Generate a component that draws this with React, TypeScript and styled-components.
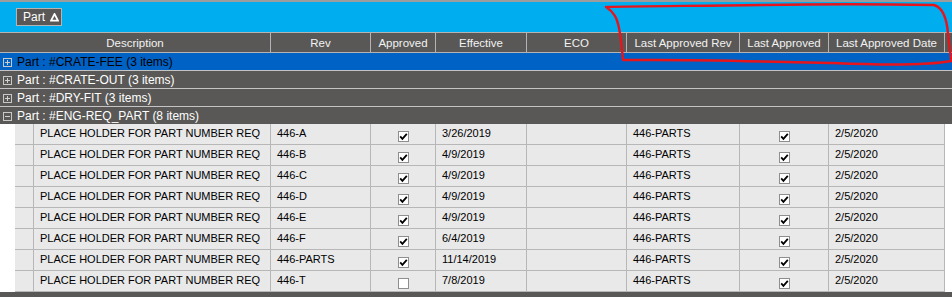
import React from "react";
import styled, { createGlobalStyle } from "styled-components";

const GlobalStyle = createGlobalStyle`
	html, body {
		margin: 0;
		padding: 0;
		background: #ffffff;
		font-family: "Liberation Sans", Arial, sans-serif;
		font-size: 11px;
	}
	* {
		box-sizing: border-box;
	}
`;

interface Column {
	title: string;
	width: number;
}

const columns: Column[] = [
	{ title: "Description", width: 271 },
	{ title: "Rev", width: 100 },
	{ title: "Approved", width: 65 },
	{ title: "Effective", width: 91 },
	{ title: "ECO", width: 100 },
	{ title: "Last Approved Rev", width: 113 },
	{ title: "Last Approved", width: 89 },
	{ title: "Last Approved Date", width: 116 }
];

interface PartRow {
	rev: string;
	approved: boolean;
	effective: string;
}

const parts: PartRow[] = [
	{ rev: "446-A", approved: true, effective: "3/26/2019" },
	{ rev: "446-B", approved: true, effective: "4/9/2019" },
	{ rev: "446-C", approved: true, effective: "4/9/2019" },
	{ rev: "446-D", approved: true, effective: "4/9/2019" },
	{ rev: "446-E", approved: true, effective: "4/9/2019" },
	{ rev: "446-F", approved: true, effective: "6/4/2019" },
	{ rev: "446-PARTS", approved: true, effective: "11/14/2019" },
	{ rev: "446-T", approved: false, effective: "7/8/2019" }
];

const groups = [
	{ name: "#CRATE-FEE", count: 3, selected: true, open: false },
	{ name: "#CRATE-OUT", count: 3, selected: false, open: false },
	{ name: "#DRY-FIT", count: 3, selected: false, open: false },
	{ name: "#ENG-REQ_PART", count: 8, selected: false, open: true }
];

const Page = styled.div`
	position: relative;
	width: 952px;
	height: 297px;
	overflow: hidden;
	border-top: 2px solid #9c9c9c;
	background: #ffffff;
`;

const GroupPanel = styled.div`
	height: 30px;
	background: #00adef;
	display: flex;
	align-items: flex-start;
	padding: 6px 0 0 16px;
`;

const GroupChip = styled.div`
	height: 18px;
	display: flex;
	align-items: center;
	gap: 5px;
	padding: 0 2px 0 6px;
	background: #595856;
	border: 1px solid #b4b4b4;
	color: #ffffff;
	font-size: 12px;
`;

const HeaderRow = styled.div`
	display: flex;
	height: 21px;
	background: #595856;
	border-top: 1px solid #b4b4b4;
	border-bottom: 1px solid #b4b4b4;
`;

const HeaderCell = styled.div<{ $w: number }>`
	width: ${p => p.$w}px;
	flex: none;
	display: flex;
	align-items: center;
	justify-content: center;
	color: #f2f2f2;
	font-size: 11.5px;
	border-right: 1px solid #b4b4b4;
	white-space: nowrap;
`;

const GroupRow = styled.div<{ $selected: boolean; $open: boolean }>`
	height: ${p => (p.$open ? 17 : 18)}px;
	display: flex;
	align-items: center;
	gap: 5px;
	padding-left: 3px;
	font-size: 12px;
	background: ${p => (p.$selected ? "#0062c4" : "#595856")};
	color: ${p => (p.$selected ? "#000000" : "#ffffff")};
	border-bottom: ${p => (p.$open ? "none" : "1px solid #c4c4c4")};
`;

const ExpandBox = styled.div`
	width: 9px;
	height: 9px;
	border: 1px solid #c8c8c8;
	position: relative;
	flex: none;
	margin-top: 1px;
`;

const DataRow = styled.div`
	display: flex;
	height: 21px;
`;

const Indent = styled.div`
	width: 15px;
	flex: none;
	background: #ffffff;
`;

const DataCell = styled.div<{ $w: number; $center?: boolean }>`
	width: ${p => p.$w}px;
	flex: none;
	background: #e9e9e9;
	border-right: 1px solid #b7b7b7;
	border-bottom: 1px solid #b7b7b7;
	color: #000000;
	padding: 3px 0 0 6px;
	white-space: nowrap;
	overflow: hidden;
	display: flex;
	justify-content: ${p => (p.$center ? "center" : "flex-start")};
	align-items: flex-start;
	${p => (p.$center ? "padding: 7px 0 0 0;" : "")}
`;

const CheckBox = styled.div`
	width: 11px;
	height: 11px;
	background: #ffffff;
	border: 1px solid #8e8e8e;
	display: flex;
	align-items: center;
	justify-content: center;
`;

const BottomBar = styled.div`
	height: 6px;
	background: #595856;
`;

const Annotation = styled.svg`
	position: absolute;
	left: 0;
	top: -2px;
	pointer-events: none;
`;

const Triangle = () => (
	<svg width="9" height="9" viewBox="0 0 9 9">
		<path d="M4.5 1 L8 7.7 L1 7.7 Z" fill="none" stroke="#ffffff" strokeWidth="1.8" />
	</svg>
);

const Expander: React.FC<{ open: boolean }> = ({ open }) => (
	<ExpandBox>
		<svg width="7" height="7" viewBox="0 0 7 7" style={{ position: "absolute", left: 0, top: 0 }}>
			<rect x="1" y="3" width="5" height="1" fill="#d0d0d0" />
			{!open && <rect x="3" y="1" width="1" height="5" fill="#d0d0d0" />}
		</svg>
	</ExpandBox>
);

const Check: React.FC<{ checked: boolean }> = ({ checked }) => (
	<CheckBox>
		{checked && (
			<svg width="9" height="9" viewBox="0 0 9 9">
				<path d="M1.2 4.4 L3.4 6.8 L7.8 1.8" fill="none" stroke="#000000" strokeWidth="1.8" />
			</svg>
		)}
	</CheckBox>
);

const App: React.FC = () => {
	const [descW, ...rest] = columns.map(c => c.width);
	return (
		<>
			<GlobalStyle />
			<Page>
				<GroupPanel>
					<GroupChip>
						Part
						<Triangle />
					</GroupChip>
				</GroupPanel>
				<HeaderRow>
					{columns.map(col => (
						<HeaderCell key={col.title} $w={col.width}>
							{col.title}
						</HeaderCell>
					))}
				</HeaderRow>
				{groups.map(g => (
					<GroupRow key={g.name} $selected={g.selected} $open={g.open}>
						<Expander open={g.open} />
						<span>{`Part : ${g.name} (${g.count} items)`}</span>
					</GroupRow>
				))}
				{parts.map(p => (
					<DataRow key={p.rev}>
						<Indent />
						<DataCell $w={19} />
						<DataCell $w={descW - 34}>PLACE HOLDER FOR PART NUMBER REQ</DataCell>
						<DataCell $w={rest[0]}>{p.rev}</DataCell>
						<DataCell $w={rest[1]} $center>
							<Check checked={p.approved} />
						</DataCell>
						<DataCell $w={rest[2]}>{p.effective}</DataCell>
						<DataCell $w={rest[3]} />
						<DataCell $w={rest[4]}>446-PARTS</DataCell>
						<DataCell $w={rest[5]} $center>
							<Check checked />
						</DataCell>
						<DataCell $w={rest[6]}>2/5/2020</DataCell>
					</DataRow>
				))}
				<BottomBar />
				<Annotation width="952" height="80" viewBox="0 0 952 80">
					<path
						d="M606 7 C640 6 700 6 760 5 C820 4 880 4 934 5 C944 8 947 20 948 34 C949 45 951 55 951 61 C930 65 880 65 833 63 C780 62 720 60 653 60 C640 60 630 60 623 60 C622 50 621 38 619 28 C617 18 614 12 606 7 Z"
						fill="none"
						stroke="#e8141c"
						strokeWidth="2.4"
						strokeLinejoin="round"
					/>
				</Annotation>
			</Page>
		</>
	);
};

export default App;
